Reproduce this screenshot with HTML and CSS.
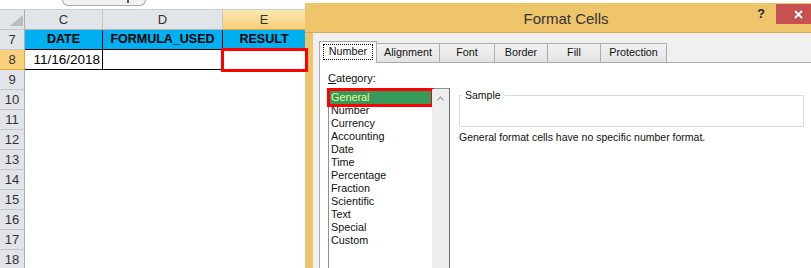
FILE: index.html
```html
<!DOCTYPE html>
<html lang="en">
<head>
  <meta charset="UTF-8">
  <title>Format Cells</title>
  <link rel="stylesheet" href="styles.css">
</head>
<body>
  <div class="sheet">
    <div class="topbar">
      <div class="scroll-tab"><span class="grip"></span></div>
    </div>
    <div class="row">
      <div class="rh corner">
        <svg width="24" height="19" viewBox="0 0 24 19"><polygon points="10,16 23,16 23,5" fill="#b9bec4"/></svg>
      </div>
      <div class="ch col-c">C</div>
      <div class="ch col-d">D</div>
      <div class="ch col-e active">E</div>
      <div class="ch col-f"></div>
    </div>
    <div class="row blue">
      <div class="rh">7</div>
      <div class="cell col-c">DATE</div>
      <div class="cell col-d">FORMULA_USED</div>
      <div class="cell col-e">RESULT</div>
    </div>
    <div class="row data">
      <div class="rh active">8</div>
      <div class="cell col-c date">11/16/2018</div>
      <div class="cell col-d"></div>
      <div class="cell col-e"></div>
    </div>
    <div class="row"><div class="rh">9</div></div>
    <div class="row"><div class="rh">10</div></div>
    <div class="row"><div class="rh">11</div></div>
    <div class="row"><div class="rh">12</div></div>
    <div class="row"><div class="rh">13</div></div>
    <div class="row"><div class="rh">14</div></div>
    <div class="row"><div class="rh">15</div></div>
    <div class="row"><div class="rh">16</div></div>
    <div class="row"><div class="rh">17</div></div>
    <div class="row"><div class="rh">18</div></div>
  </div>

  <div class="dialog">
    <div class="titlebar">
      <span></span>
      <span class="title">Format Cells</span>
      <div class="controls">
        <span class="help">?</span>
        <span class="close">
          <svg width="9" height="9" viewBox="0 0 9 9"><path d="M1 1 L8 8 M8 1 L1 8" stroke="#fff" stroke-width="1.8"/></svg>
        </span>
      </div>
    </div>
    <div class="dlg-body">
      <div class="tabs">
        <div class="tab on t-number"><span class="focus">Number</span></div>
        <div class="tab t-align">Alignment</div>
        <div class="tab t-font">Font</div>
        <div class="tab t-border">Border</div>
        <div class="tab t-fill">Fill</div>
        <div class="tab t-prot">Protection</div>
      </div>
      <div class="panel">
        <div class="cat">
          <div class="label"><u>C</u>ategory:</div>
          <div class="listbox">
            <ul class="items">
              <li class="sel">General</li>
              <li>Number</li>
              <li>Currency</li>
              <li>Accounting</li>
              <li>Date</li>
              <li>Time</li>
              <li>Percentage</li>
              <li>Fraction</li>
              <li>Scientific</li>
              <li>Text</li>
              <li>Special</li>
              <li>Custom</li>
            </ul>
            <div class="scroll">
              <svg width="7" height="5" viewBox="0 0 7 5"><polyline points="0.5,4.5 3.5,1 6.5,4.5" fill="none" stroke="#a8a8a8" stroke-width="1.2"/></svg>
            </div>
          </div>
        </div>
        <div class="side">
          <fieldset class="sample">
            <legend>Sample</legend>
            <div class="sample-box"></div>
          </fieldset>
          <p class="desc">General format cells have no specific number format.</p>
        </div>
      </div>
    </div>
  </div>

  <div class="result-mark"></div>
</body>
</html>
```

FILE: styles.css
```css
* {
  margin: 0;
  padding: 0;
  box-sizing: border-box;
}

body {
  width: 811px;
  height: 268px;
  overflow: hidden;
  position: relative;
  background-color: #fff;
  font-family: "Liberation Sans", Arial, sans-serif;
  color: #000;
}

/* spreadsheet */
.sheet {
  display: flex;
  flex-direction: column;
  height: 268px;
  overflow: hidden;
}

.topbar {
  height: 10px;
  flex: none;
  border-bottom: 1px solid #c9cdd2;
}

.topbar .scroll-tab {
  margin-left: 62px;
  width: 84px;
  height: 6px;
  border: 1px solid #a9adb2;
  border-top: none;
  border-radius: 0 0 7px 7px;
  background-color: #f1f1f1;
  display: flex;
  justify-content: flex-end;
  padding-right: 16px;
}

.topbar .grip {
  width: 2px;
  height: 3px;
  background-color: #555;
}

.row {
  display: flex;
  height: 20px;
  flex: none;
}

.rh {
  width: 25px;
  flex: none;
  background-color: #e1e4e9;
  border-right: 1px solid #a9aeb5;
  border-bottom: 1px solid #c3c7cc;
  text-align: center;
  font-size: 13px;
  line-height: 19px;
  color: #333;
}

.rh.active {
  background-color: #f7d17c;
  border-right-color: #e2a73a;
  border-bottom-color: #e2a73a;
}

.rh.corner svg {
  display: block;
}

.col-c {
  width: 78px;
  flex: none;
}

.col-d {
  width: 120px;
  flex: none;
}

.col-e {
  width: 83px;
  flex: none;
}

.col-f {
  flex: 1;
}

.ch {
  background-color: #e1e4e9;
  border-right: 1px solid #c3c7cc;
  border-bottom: 1px solid #b0b5bb;
  text-align: center;
  font-size: 13px;
  line-height: 19px;
  color: #333;
}

.ch.active {
  background: linear-gradient(#fbe7b0, #f6d07c);
  border-bottom-color: #e2a73a;
}

.cell {
  border-right: 1px solid #000;
  border-bottom: 1px solid #000;
  line-height: 19px;
  color: #000;
}

.row.blue .cell {
  background-color: #00b0f0;
  font-weight: bold;
  font-size: 12.5px;
  text-align: center;
}

.row.data .cell {
  font-size: 13.5px;
}

.cell.date {
  text-align: right;
  padding-right: 2px;
}

.result-mark {
  position: absolute;
  left: 221px;
  top: 48px;
  width: 87px;
  height: 24px;
  border: 3px solid #f00;
  z-index: 3;
}

/* dialog window */
.dialog {
  position: absolute;
  left: 305px;
  top: 3px;
  bottom: 0;
  width: 522px;
  background-color: #efc56c;
  display: flex;
  flex-direction: column;
}

.titlebar {
  height: 30px;
  flex: none;
  border-bottom: 1px solid #d3ab5f;
  display: grid;
  grid-template-columns: 1fr auto 1fr;
  align-items: center;
}

.title {
  font-size: 15px;
  color: #333;
  padding-top: 1px;
}

.controls {
  justify-self: end;
  align-self: start;
  display: flex;
  align-items: flex-start;
  margin-right: 6px;
}

.help {
  font-weight: bold;
  font-size: 12.5px;
  color: #222;
  margin-top: 4px;
  margin-right: 11px;
}

.close {
  width: 45px;
  height: 20px;
  margin-top: 1px;
  background-color: #c75050;
  display: flex;
  align-items: center;
  justify-content: center;
}

.dlg-body {
  flex: 1;
  min-height: 0;
  margin: 0 8px;
  background-color: #f0f0f0;
  padding: 8px 0 0 6px;
  display: flex;
  flex-direction: column;
  font-size: 10.5px;
  color: #111;
}

.tabs {
  display: flex;
  align-items: flex-end;
  height: 21px;
  flex: none;
}

.tab {
  height: 19px;
  border: 1px solid #acacac;
  border-bottom: none;
  margin-left: -1px;
  background: linear-gradient(#f3f3f3, #e3e3e3);
  text-align: center;
  line-height: 17px;
  font-size: 10.8px;
}

.tab.on {
  height: 22px;
  margin-left: 0;
  margin-bottom: -1px;
  background: #fff;
  position: relative;
  z-index: 1;
  padding-top: 2px;
}

.tab .focus {
  display: block;
  margin: 0 3px;
  height: 16px;
  line-height: 15px;
  outline: 1px dotted #000;
  outline-offset: -1px;
}

.t-number { width: 58px; }
.t-align { width: 64px; }
.t-font { width: 56px; }
.t-border { width: 54px; }
.t-fill { width: 54px; }
.t-prot { width: 67px; }

.panel {
  flex: 1;
  min-height: 0;
  background-color: #fff;
  border-top: 1px solid #acacac;
  border-left: 1px solid #acacac;
  padding: 9px 0 0 8px;
  display: flex;
  gap: 9px;
}

.cat {
  width: 122px;
  flex: none;
  display: flex;
  flex-direction: column;
}

.label {
  font-size: 11px;
  line-height: 13px;
  margin-bottom: 3px;
}

.listbox {
  flex: 1;
  border: 1px solid #8c9097;
  border-right-color: #6c6c6c;
  border-bottom: none;
  display: flex;
}

.items {
  flex: 1;
  list-style: none;
  padding: 2px 1px 0 1px;
}

.items li {
  font-size: 10.8px;
  line-height: 13px;
  padding-left: 1px;
}

.items li.sel {
  background-color: #379a5b;
  color: #eef59a;
  outline: 3px solid #f00;
}

.scroll {
  width: 17px;
  flex: none;
  background-color: #eeeeee;
  display: flex;
  justify-content: center;
  padding-top: 7px;
}

.scroll svg {
  display: block;
}

.side {
  width: 345px;
  flex: none;
  padding-top: 17px;
}

.sample {
  border: 1px solid #dcdcdc;
  padding: 0;
  margin: 0;
}

.sample legend {
  line-height: 13px;
  padding: 0 3px;
  margin-left: 2px;
}

.sample-box {
  height: 24px;
}

.desc {
  margin-top: 4px;
  line-height: 13px;
}
```
